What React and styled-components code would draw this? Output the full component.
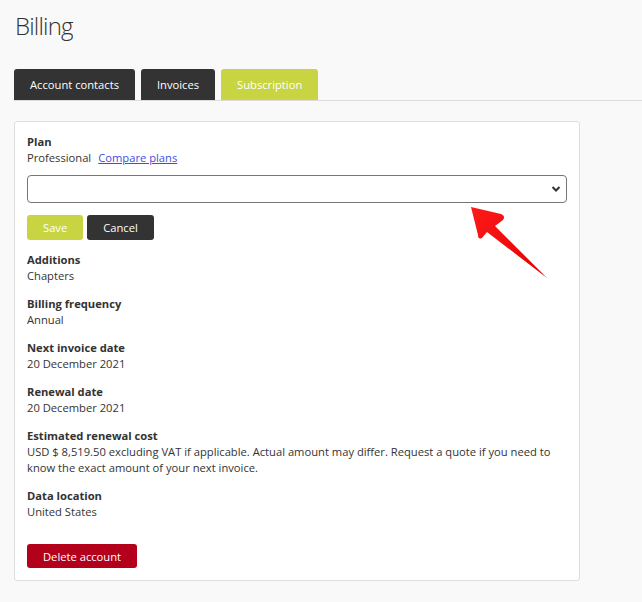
import React from "react";
import styled, { createGlobalStyle } from "styled-components";

const Global = createGlobalStyle`
  html, body { margin: 0; padding: 0; background: #f9f9f9; }
  body { font-family: "Open Sans", "Liberation Sans", sans-serif; color: #333; font-size: 11.2px; }
`;

const Page = styled.div`
  position: relative;
  padding: 8px 0 20px 14px;
  min-height: 602px;
  box-sizing: border-box;
`;

const Title = styled.h1`
  margin: 0 0 26px 0;
  font-size: 24px;
  font-weight: 300;
  letter-spacing: -0.8px;
  line-height: 35px;
  color: #333;
  padding-left: 1px;
`;

const TabBar = styled.div`
  display: flex;
  gap: 6px;
  border-bottom: 1px solid #dcdcdc;
`;

const Tab = styled.div`
  height: 31px;
  padding: 0 16px;
  display: flex;
  align-items: center;
  color: #fff;
  font-size: 11.2px;
  border-radius: 3px 3px 0 0;
  background: ${(p) => (p.$active ? "#c8d441" : "#333333")};
`;

const Card = styled.div`
  margin-top: 20px;
  width: 566px;
  box-sizing: border-box;
  background: #fff;
  border: 1px solid #dedede;
  border-radius: 3px;
  padding: 12px;
`;

const Label = styled.div`
  font-weight: 700;
  line-height: 16px;
`;

const Value = styled.div`
  line-height: 16px;
`;

const Group = styled.div`
  margin-top: ${(p) => p.$mt || 12}px;
`;

const Link = styled.a`
  color: #3b4fe4;
  text-decoration: underline;
  margin-left: 7px;
`;

const SelectBox = styled.div`
  margin-top: 9px;
  height: 28px;
  box-sizing: border-box;
  border: 1px solid #767676;
  border-radius: 4px;
  display: flex;
  align-items: center;
  justify-content: flex-end;
  padding-right: 5px;
`;

const ButtonRow = styled.div`
  display: flex;
  gap: 4px;
  margin-top: 12px;
`;

const Button = styled.button`
  font-family: inherit;
  font-size: 11.2px;
  color: #fff;
  border: none;
  border-radius: 3px;
  height: ${(p) => p.$h || 25}px;
  padding: 0 ${(p) => p.$px || 16}px;
  background: ${(p) => p.$bg};
  cursor: pointer;
`;

const ArrowSvg = styled.svg`
  position: absolute;
  left: 465px;
  top: 200px;
  overflow: visible;
`;

export default function App() {
  return (
    <>
      <Global />
      <Page>
        <Title>Billing</Title>
        <TabBar>
          <Tab>Account contacts</Tab>
          <Tab>Invoices</Tab>
          <Tab $active>Subscription</Tab>
        </TabBar>
        <Card>
          <Label>Plan</Label>
          <Value>
            Professional<Link href="#">Compare plans</Link>
          </Value>
          <SelectBox>
            <svg width="10" height="8" viewBox="0 0 10 8">
              <path d="M1.5 2 L5 5.5 L8.5 2" fill="none" stroke="#333" strokeWidth="2" />
            </svg>
          </SelectBox>
          <ButtonRow>
            <Button $bg="#c8d441" $px={16}>Save</Button>
            <Button $bg="#333333" $px={16}>Cancel</Button>
          </ButtonRow>
          <Group>
            <Label>Additions</Label>
            <Value>Chapters</Value>
          </Group>
          <Group>
            <Label>Billing frequency</Label>
            <Value>Annual</Value>
          </Group>
          <Group>
            <Label>Next invoice date</Label>
            <Value>20 December 2021</Value>
          </Group>
          <Group>
            <Label>Renewal date</Label>
            <Value>20 December 2021</Value>
          </Group>
          <Group>
            <Label>Estimated renewal cost</Label>
            <Value>
              USD $ 8,519.50 excluding VAT if applicable. Actual amount may differ. Request a quote if you need to know the exact amount of your next invoice.
            </Value>
          </Group>
          <Group>
            <Label>Data location</Label>
            <Value>United States</Value>
          </Group>
          <Group $mt={24}>
            <Button $bg="#b3001b" $h={24} $px={16}>Delete account</Button>
          </Group>
        </Card>
        <ArrowSvg width="90" height="85" viewBox="465 200 90 85">
          <defs>
            <linearGradient id="ag" x1="0" y1="0" x2="1" y2="1">
              <stop offset="0" stopColor="#ff1a1a" />
              <stop offset="1" stopColor="#e00000" />
            </linearGradient>
          </defs>
          <path
            d="M471 207 L501 214 Q506 216 503 220 L495 226 L547 278 L487 232 L482 238 Q478 240 478 235 Z"
            fill="url(#ag)"
          />
        </ArrowSvg>
      </Page>
    </>
  );
}
